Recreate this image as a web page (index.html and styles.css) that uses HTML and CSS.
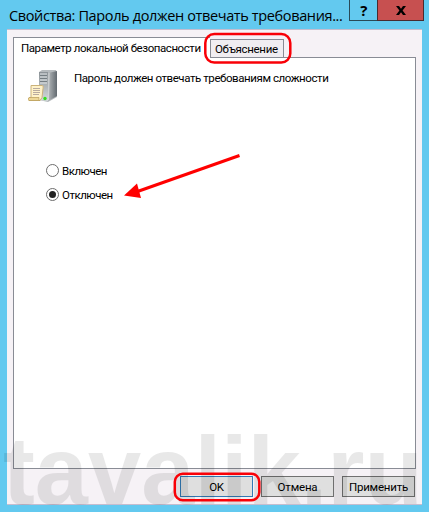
FILE: index.html
```
<!DOCTYPE html>
<html lang="ru">
<head>
<meta charset="utf-8">
<title>Свойства: Пароль должен отвечать требованиям сложности</title>
<link rel="stylesheet" href="styles.css">
</head>
<body>
<div class="window">
  <header class="titlebar">
    <h1 class="title">Свойства: Пароль должен отвечать требования...</h1>
    <div class="controls">
      <button class="help" aria-label="Справка">?</button>
      <button class="close" aria-label="Закрыть"><svg width="10" height="9" viewBox="0 0 10 9"><path d="M0 0h3l2 2.700L7 0h3L6.600 4.500 10 9H7L5 6.300 3 9H0l3.400-4.500z"/></svg></button>
    </div>
  </header>
  <main class="dialog">
    <nav class="tabs">
      <button class="tab active">Параметр локальной безопасности</button>
      <button class="tab other">Объяснение</button>
    </nav>
    <section class="panel">
      <div class="policy">
        <svg class="server" width="32" height="33" viewBox="0 0 32 33">
          <defs>
            <linearGradient id="side"><stop offset="0" stop-color="#b4b8ba"/><stop offset="1" stop-color="#626a70"/></linearGradient>
            <linearGradient id="front" x2="0" y2="1"><stop offset="0" stop-color="#8b9297"/><stop offset="1" stop-color="#d5dadc"/></linearGradient>
          </defs>
          <path d="M11 2 14 0h14l1 3v24l-9 5-9-2z" fill="#b5babd"/>
          <path d="m20 3 9-2v25l-9 5z" fill="url(#side)"/>
          <path d="M11 2h9v29l-9-1z" fill="url(#front)"/>
          <path d="M12 4h7M12 7h7M12 10h7M12 13h7" stroke="#e2e7e9"/>
          <path d="M12 5.500h7M12 8.500h7M12 11.500h7" stroke="#747d82"/>
          <path d="m20.500 30 .5-27" stroke="#d4d8da"/>
          <circle cx="17" cy="28.500" r="1.700" fill="#35df20"/>
          <path d="M3 15.500h11q2 0 1 3l-1 9-2 3H1q-2-2 2-3z" fill="#fff2c9" stroke="#cbb27a"/>
          <path d="M1 27.500h10q-1 2 1 3H1q-2-1 0-3z" fill="#edd797" stroke="#b89b58" stroke-width=".7"/>
          <path d="M5 18.500h7M5 20.500h7M5 22.500h7M5 24.500h6" stroke="#b8aba0"/>
        </svg>
        <p>Пароль должен отвечать требованиям сложности</p>
      </div>
      <div class="options">
        <div class="option"><i class="radio"></i><span>Включен</span></div>
        <div class="option"><i class="radio checked"></i><span>Отключен</span></div>
      </div>
    </section>
    <footer class="actions">
      <button class="default">OK</button>
      <button>Отмена</button>
      <button>Применить</button>
    </footer>
  </main>
  <svg class="overlay" width="429" height="512" viewBox="0 0 429 512">
    <text class="watermark" x="3" y="504" textLength="420" lengthAdjust="spacingAndGlyphs">tavalik.ru</text>
    <g fill="none" stroke="#f90007" stroke-width="2.500">
      <rect x="205.300" y="34" width="85" height="28.500" rx="9"/>
      <rect x="174.800" y="473.700" width="84.500" height="26.500" rx="8"/>
    </g>
    <path d="m239.500 155.500-102 36" stroke="red" stroke-width="3"/>
    <path d="m124 195.500 13-12 4 14.500z" fill="red"/>
  </svg>
</div>
</body>
</html>
```
FILE: styles.css
```
* { box-sizing: border-box; }
body { margin: 0; }
button { margin: 0; padding: 0; border-radius: 0; font: inherit; letter-spacing: inherit; color: #000; }
.window {
  position: relative;
  width: 429px;
  height: 512px;
  overflow: hidden;
  display: flex;
  flex-direction: column;
  background: #63c9ef;
  color: #000;
  font: 11.5px/14px Roboto, "Liberation Sans", sans-serif;
  letter-spacing: -.43px;
  white-space: nowrap;
}
.titlebar { height: 29px; display: flex; justify-content: space-between; padding: 0 5px 0 9px; }
.title { margin: 0; padding-top: 6px; font: 14.5px/20px "Open Sans", "Noto Sans", sans-serif; letter-spacing: -.37px; }
.controls { display: flex; height: 21px; }
.controls button { border: 1px solid #294a57; border-top: 0; display: flex; align-items: center; justify-content: center; }
.controls .help { width: 28px; background: #63c9ef; border-right: 0; font: bold 15px/20px "Open Sans", sans-serif; }
.controls .close { width: 47px; background: #c75050; border-color: #492b2f; }
.dialog {
  width: 415px;
  height: 476px;
  margin-left: 7px;
  padding: 7px 6px 0;
  background: #f6f2f6;
  border: 1px solid #c5bdcf;
  border-width: 1px 0;
}
.tabs { height: 20px; display: flex; align-items: flex-end; }
.tab { border: 1px solid #898c95; border-bottom: 0; text-align: left; }
.active { position: relative; width: 197px; height: 21px; margin-bottom: -1px; padding: 0 0 1px 7px; background: #fff; border-right: 0; }
.other { width: 74px; height: 18px; padding-left: 4px; background: #f0edf1; letter-spacing: -.3px; }
.panel { width: 403px; height: 412px; padding: 12px 0 0 14px; background: #fff; border: 1px solid #898c95; }
.policy { display: flex; height: 93px; }
.policy p { margin: 1px 0 0 14px; }
.options { display: flex; flex-direction: column; gap: 9px; padding-left: 18px; }
.option { height: 15px; display: flex; align-items: center; gap: 3px; letter-spacing: -.5px; }
.radio { width: 13px; height: 13px; border: 1px solid #6d6d6d; border-radius: 50%; background: #fff; display: flex; align-items: center; justify-content: center; }
.checked::after { content: ""; width: 7px; height: 7px; border-radius: 50%; background: #222; }
.actions { display: flex; justify-content: flex-end; gap: 8px; padding: 7px 1px 0 0; }
.actions button { width: 73px; height: 21px; border: 1px solid #707070; background: #dfdfdf; letter-spacing: -.2px; }
.actions .default { border: 1px solid #3279b4; }
.overlay { position: absolute; left: 0; top: 0; pointer-events: none; }
.watermark { font: bold 96px "Liberation Sans", sans-serif; letter-spacing: 0; fill: #000; opacity: .085; }
```
